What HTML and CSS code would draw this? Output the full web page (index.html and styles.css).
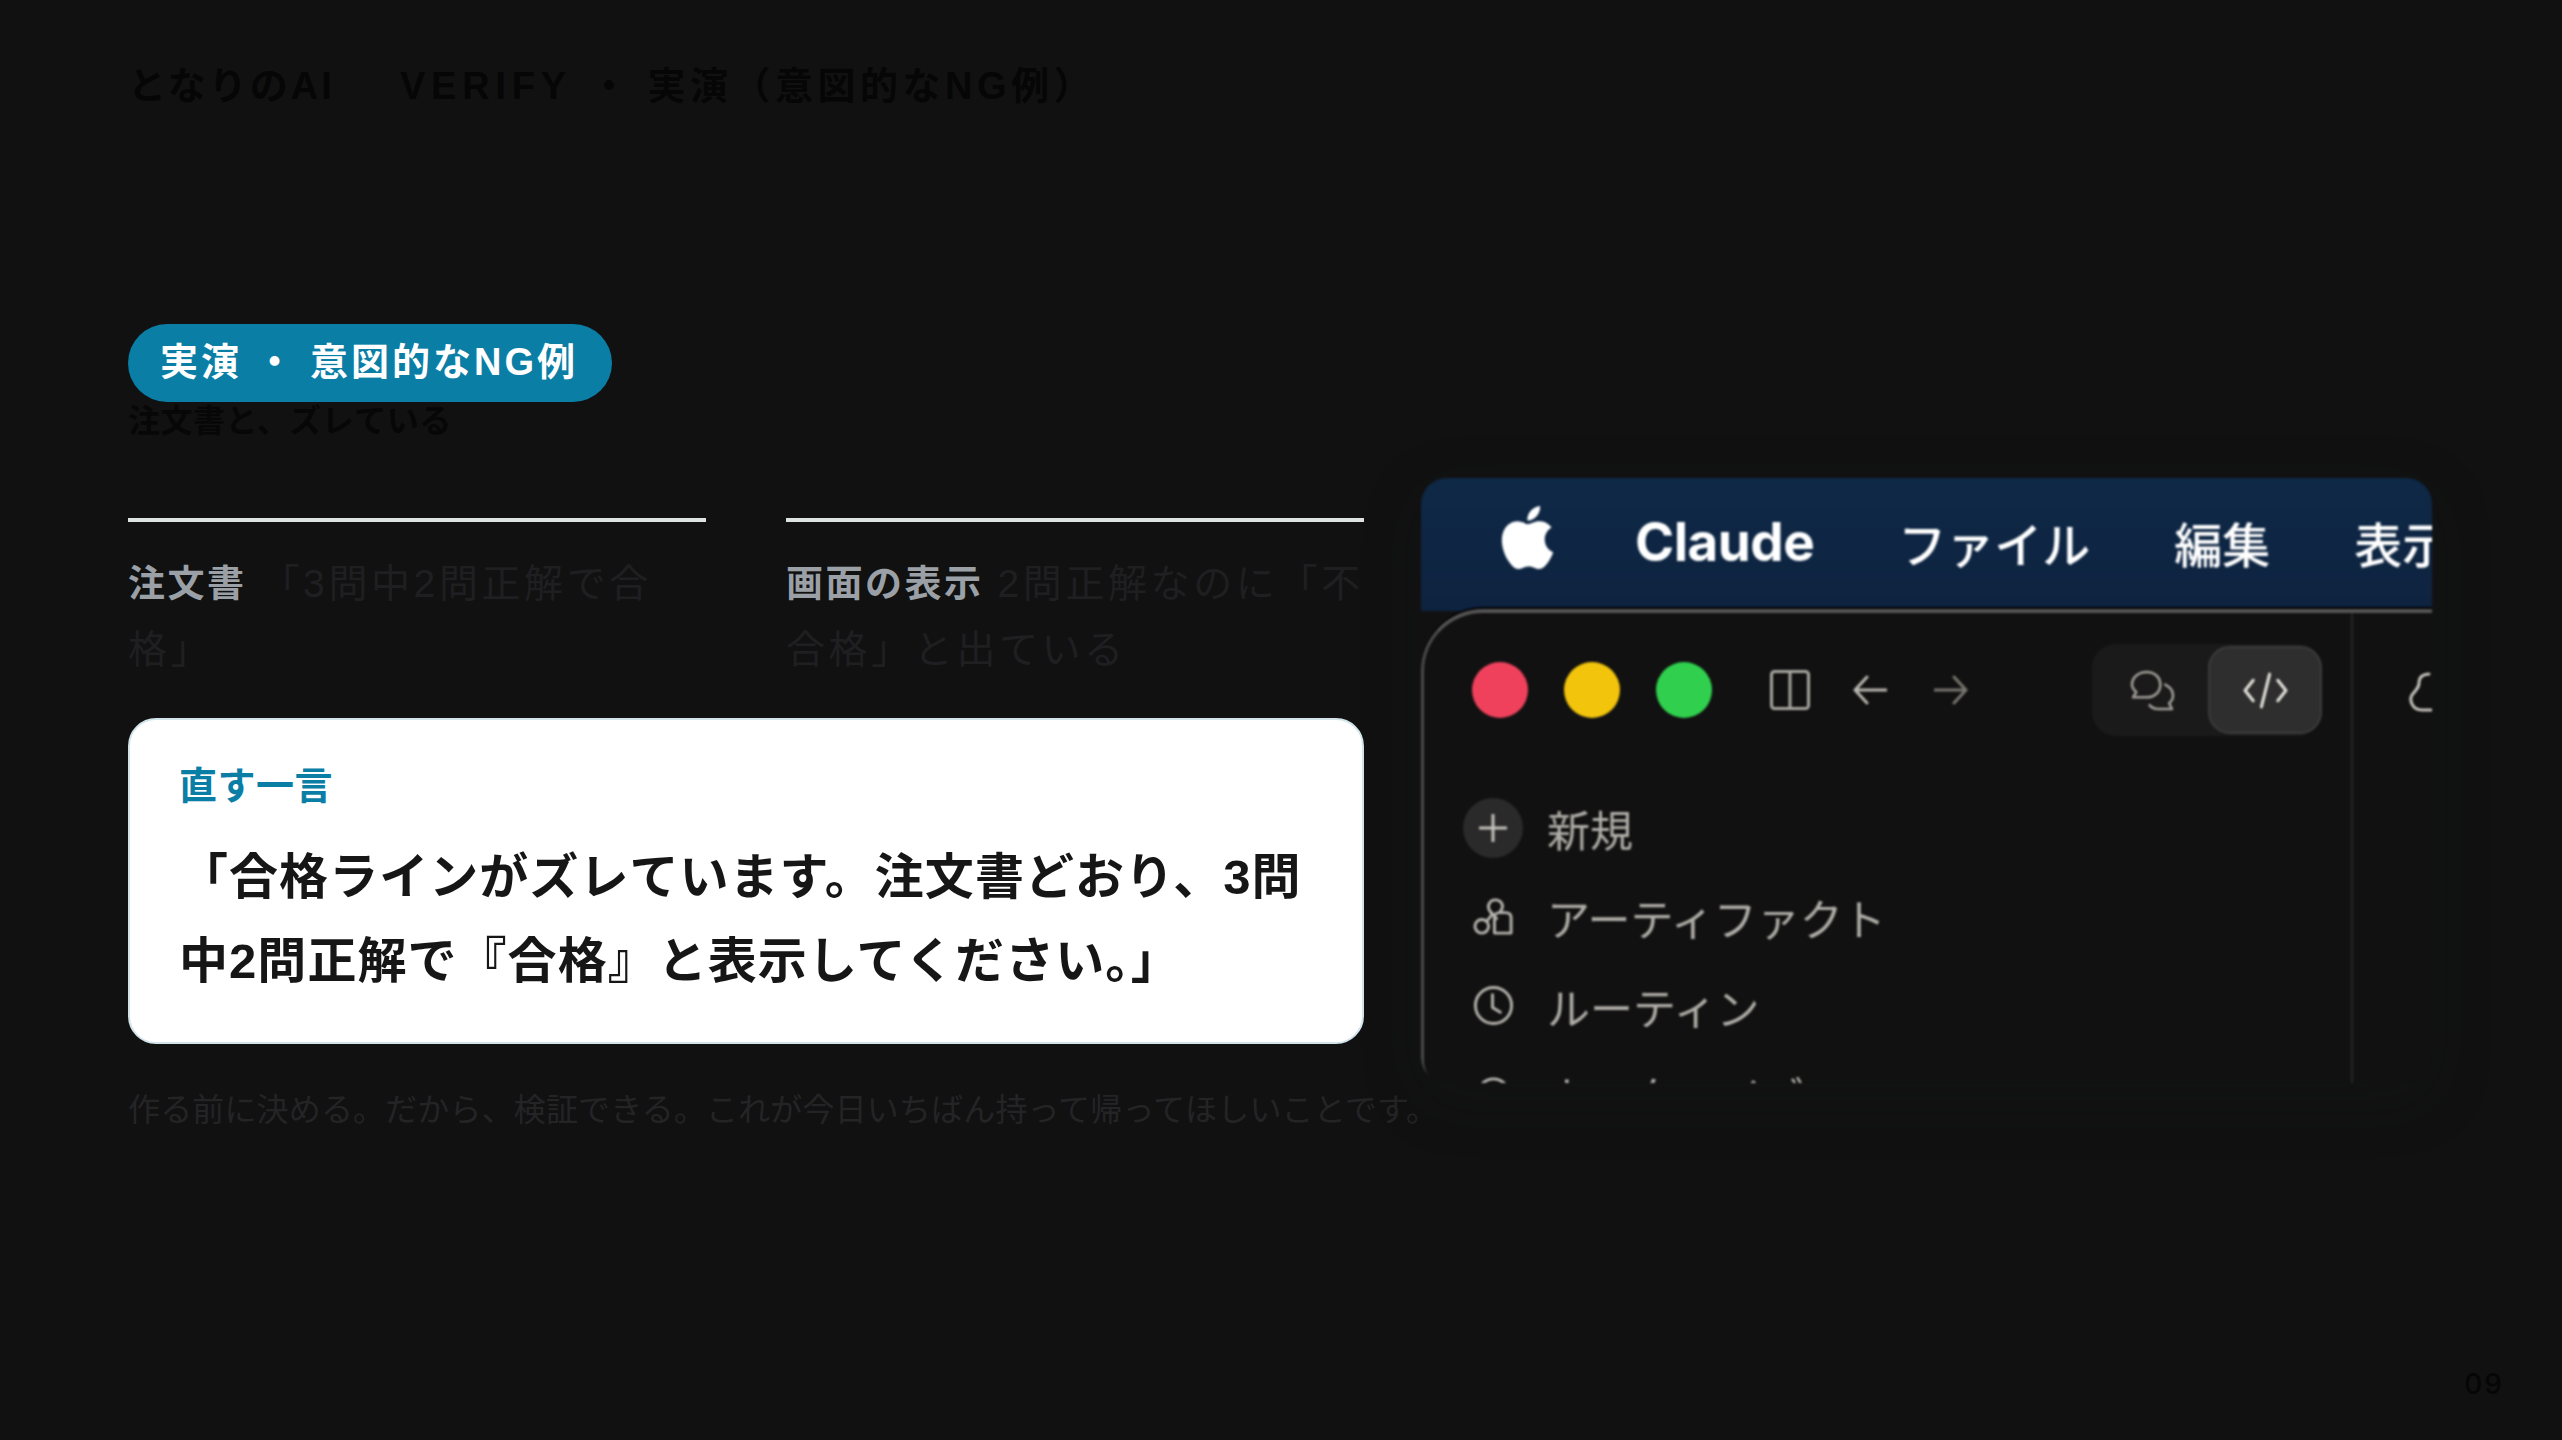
FILE: index.html
```html
<!DOCTYPE html>
<html lang="ja">
<head>
<meta charset="utf-8">
<title>実演 ・ 意図的なNG例</title>
<link rel="stylesheet" href="styles.css">
</head>
<body>
<div class="page">
  <header class="head"><span class="brand">となりのAI</span><span class="verify">VERIFY</span><span class="crumb"> ・ 実演（意図的なNG例）</span></header>
  <main class="main">
    <section class="left">
      <div class="pill">実演 ・ 意図的なNG例</div>
      <h2 class="sub">注文書と、ズレている</h2>
      <div class="cols">
        <div class="col"><p class="col-text"><b>注文書</b>「3問中2問正解で合格」</p></div>
        <div class="col"><p class="col-text"><b>画面の表示</b>2問正解なのに「不合格」と出ている</p></div>
      </div>
      <div class="card">
        <div class="card-label">直す一言</div>
        <p class="card-text">「合格ラインがズレています。注文書どおり、3問中2問正解で『合格』と表示してください。」</p>
      </div>
      <p class="note">作る前に決める。だから、検証できる。これが今日いちばん持って帰ってほしいことです。</p>
    </section>
    <figure class="shot">
      <div class="menubar">
        <svg class="apple" viewBox="0 0 24 24" fill="#fff"><path d="M12.152 6.896c-.948 0-2.415-1.078-3.96-1.04-2.04.027-3.91 1.183-4.961 3.014-2.117 3.675-.546 9.103 1.519 12.09 1.013 1.454 2.208 3.09 3.792 3.039 1.52-.065 2.09-.987 3.935-.987 1.831 0 2.35.987 3.96.948 1.637-.026 2.676-1.48 3.676-2.948 1.156-1.688 1.636-3.325 1.662-3.415-.039-.013-3.182-1.221-3.22-4.857-.026-3.04 2.48-4.494 2.597-4.559-1.429-2.09-3.623-2.324-4.39-2.376-2-.156-3.675 1.09-4.61 1.09zM15.53 3.83c.843-1.012 1.4-2.427 1.245-3.83-1.207.052-2.662.805-3.532 1.818-.78.896-1.454 2.338-1.273 3.714 1.338.104 2.715-.688 3.559-1.701"/></svg>
        <span class="app">Claude</span>
        <span>ファイル</span>
        <span>編集</span>
        <span>表示</span>
      </div>
      <div class="window">
        <div class="sidebar">
          <div class="toolbar">
            <div class="lights"><i class="light red"></i><i class="light yellow"></i><i class="light green"></i></div>
            <svg class="tb-icon panel" viewBox="0 0 40 40" fill="none" stroke="#a8a6a0" stroke-width="3"><rect x="1.5" y="1.5" width="37" height="37" rx="3"/><path d="M20 1.5v37"/></svg>
            <svg class="tb-icon arrow" viewBox="0 0 34 30" fill="none" stroke="#b8b6b0" stroke-width="3" stroke-linecap="round" stroke-linejoin="round"><path d="M33 15H2M14 2 2 15l12 13"/></svg>
            <svg class="tb-icon arrow fwd" viewBox="0 0 34 30" fill="none" stroke="#77756f" stroke-width="3" stroke-linecap="round" stroke-linejoin="round"><path d="M1 15h31M20 2l12 13-12 13"/></svg>
            <div class="segment">
              <div class="seg-item">
                <svg class="seg-icon chat" viewBox="0 0 46 42" fill="none" stroke="#a09e98" stroke-width="2.6" stroke-linejoin="round" stroke-linecap="round"><path d="M17 2c8 0 14 5.500 14 13 0 7.500-6 13-14 13H3l3.500-5.500C3.500 20 2 18 2 15 2 7.500 9 2 17 2z"/><path d="M36 15c5 2.500 8 6.500 8 11 0 3.500-1.500 6-4 8l3 6H29c-4 0-7-1.500-9-4"/></svg>
              </div>
              <div class="seg-item active">
                <svg class="seg-icon" viewBox="0 0 44 36" fill="none" stroke="#e4e2dc" stroke-width="3" stroke-linecap="round" stroke-linejoin="round"><path d="M10 8 2 18l8 10M34 8l8 10-8 10M26 2l-8 32"/></svg>
              </div>
            </div>
          </div>
          <ul class="nav">
            <li class="nav-item"><span class="nav-ico plus"><svg viewBox="0 0 28 28" fill="none" stroke="#c4c2bc" stroke-width="3" stroke-linecap="round"><path d="M14 1v26M1 14h26"/></svg></span><span>新規</span></li>
            <li class="nav-item"><span class="nav-ico"><svg viewBox="0 0 42 38" fill="none" stroke="#b4b2ac" stroke-width="3" stroke-linejoin="round"><path d="M25 22c-3-3-6-6-8-9-3-5 0-11 6-11 5 0 8 4 7 8-1 3-2 4-3 6"/><path d="M22 36V20c0-3 2-5 5-5h6c4 0 6 2 6 5v16z"/><circle cx="9" cy="29" r="7"/><path d="M14 24l7-9"/></svg></span><span>アーティファクト</span></li>
            <li class="nav-item"><span class="nav-ico"><svg viewBox="0 0 42 42" fill="none" stroke="#b4b2ac" stroke-width="3" stroke-linecap="round" stroke-linejoin="round"><circle cx="21" cy="21" r="18.500"/><path d="M20 10v13l8 5"/></svg></span><span>ルーティン</span></li>
            <li class="nav-item"><span class="nav-ico"><svg viewBox="0 0 42 42" fill="none" stroke="#b4b2ac" stroke-width="3"><circle cx="21" cy="21" r="16"/></svg></span><span>カスタマイズ</span></li>
          </ul>
        </div>
        <div class="pane">
          <svg class="pane-icon" viewBox="0 0 40 42" fill="none" stroke="#c4c2bc" stroke-width="3" stroke-linecap="round"><path d="M26 3c-6 0-10 3-10 9 0 4-2 6-7 12-3 5 0 15 10 15h12"/></svg>
        </div>
      </div>
    </figure>
  </main>
  <footer class="pageno">09</footer>
</div>
</body>
</html>
```
FILE: styles.css
```css
* { box-sizing: border-box; }
html, body { margin: 0; padding: 0; background: #111111; }
body { font-family: "Liberation Sans", "Noto Sans CJK JP", sans-serif; }
.page {
  width: 2562px;
  height: 1440px;
  padding: 59px 58px 39px 128px;
  display: flex;
  flex-direction: column;
  overflow: hidden;
  background: #111111;
}
.head {
  font-size: 38px;
  line-height: 54px;
  font-weight: 700;
  letter-spacing: 4.5px;
  color: #060606;
  white-space: nowrap;
}
.brand { margin-right: 65px; letter-spacing: 3px; }
.verify { letter-spacing: 5.8px; }
.crumb { margin-left: 3px; }
.main {
  display: flex;
  align-items: flex-start;
  gap: 57px;
  margin-top: 211px;
}
.left { width: 1236px; flex: none; }
.pill {
  display: inline-flex;
  align-items: center;
  height: 78px;
  width: 484px;
  padding: 0 32px 9px;
  border-radius: 39px;
  background: #0b7ea6;
  color: #fff;
  font-size: 38px;
  font-weight: 700;
  letter-spacing: 3px;
  white-space: nowrap;
  vertical-align: top;
}
.sub {
  margin: 3px 0 0;
  font-size: 32px;
  line-height: 32px;
  font-weight: 700;
  letter-spacing: 0.5px;
  color: #070707;
}
.cols {
  display: grid;
  grid-template-columns: 578px 578px;
  gap: 80px;
  margin-top: 81px;
}
.col { border-top: 4px solid #dde3e3; padding-top: 29px; }
.col-text {
  margin: 0;
  font-size: 39px;
  line-height: 65px;
  letter-spacing: 3.6px;
  color: #1f1f21;
}
.col-text b { color: #9aa0a6; font-weight: 700; font-size: 37px; letter-spacing: 2.5px; margin-right: 14px; }
.card {
  margin-top: 36px;
  height: 326px;
  padding: 42px 49px;
  background: #fff;
  border: 2px solid #d2e4ea;
  border-radius: 28px;
}
.card-label {
  font-size: 38px;
  line-height: 48px;
  font-weight: 700;
  letter-spacing: 0.5px;
  color: #0b7ea6;
}
.card-text {
  margin: 25px 0 0;
  font-size: 49px;
  line-height: 84px;
  font-weight: 700;
  letter-spacing: 1.05px;
  color: #161616;
}
.note {
  margin: 42px 0 0;
  font-size: 32px;
  line-height: 48px;
  letter-spacing: 0.15px;
  color: #242426;
  white-space: nowrap;
}
.shot {
  flex: none;
  margin: 154px 0 0;
  width: 1011px;
  height: 605px;
  border-radius: 26px;
  overflow: hidden;
  background: linear-gradient(180deg, #0e2947 0%, #0e2340 22%, #111 22%);
  filter: blur(0.9px);
  box-shadow: 0 16px 60px rgba(24, 28, 32, 0.22);
  position: relative;
}
.menubar {
  height: 131px;
  display: flex;
  align-items: center;
  padding: 0 0 3px 75px;
  gap: 84px;
  color: #fff;
  font-size: 48px;
  font-weight: 500;
  white-space: nowrap;
  font-family: "Noto Sans CJK JP", sans-serif;
}
.apple { width: 63px; height: 63px; flex: none; margin: -10px -8px 0 0; }
.app { font-family: Inter, "Liberation Sans", sans-serif; font-weight: 700; font-size: 53px; letter-spacing: -0.5px; }
.window {
  height: 474px;
  display: flex;
  background: #111;
  border-top: 4px solid #555;
  border-left: 3px solid #4a4a4a;
  border-top-left-radius: 62px;
  border-bottom-left-radius: 22px;
  box-shadow: 0 -2px 0 #000;
}
.sidebar { width: 929px; flex: none; border-right: 2px solid #262626; }
.toolbar {
  display: flex;
  align-items: center;
  height: 120px;
  margin-top: 17px;
  padding-left: 48px;
}
.lights { display: flex; gap: 36px; }
.light { display: block; width: 56px; height: 56px; border-radius: 50%; }
.red { background: #f0415c; }
.yellow { background: #f2c40c; }
.green { background: #30d04e; }
.tb-icon { display: block; flex: none; }
.panel { width: 40px; height: 40px; margin-left: 58px; }
.arrow { width: 34px; height: 30px; margin-left: 43px; }
.arrow.fwd { margin-left: 47px; }
.segment {
  display: flex;
  align-items: center;
  width: 230px;
  height: 92px;
  margin-left: 124px;
  background: #1a1a1a;
  border-radius: 24px;
}
.seg-item { flex: 1; height: 88px; display: flex; align-items: center; justify-content: center; border-radius: 22px; }
.seg-item.active { flex: none; width: 114px; background: #2e2e2e; border: 2px solid #3c3c3c; }
.seg-icon { width: 45px; height: 41px; display: block; }
.seg-icon.chat { margin-left: 4px; }
.nav {
  list-style: none;
  margin: 33px 0 0;
  padding: 0 0 0 39px;
  font-size: 43px;
  color: #b0aea8;
  font-family: "Noto Sans CJK JP", sans-serif;
}
.nav-item { display: flex; align-items: center; height: 89px; gap: 24px; white-space: nowrap; }
.nav-ico { width: 60px; height: 60px; flex: none; display: flex; align-items: center; justify-content: center; }
.nav-ico svg { width: 41px; height: 41px; display: block; }
.nav-ico.plus { background: #2a2a2a; border-radius: 50%; }
.nav-ico.plus svg { width: 28px; height: 28px; }
.pane { flex: 1; display: flex; align-items: flex-start; padding: 58px 0 0 50px; overflow: hidden; }
.pane-icon { width: 40px; height: 42px; flex: none; }
.pageno {
  margin-top: auto;
  align-self: flex-end;
  font-family: Inter, "Noto Sans", sans-serif;
  font-size: 28px;
  line-height: 34px;
  font-weight: 500;
  letter-spacing: 2px;
  color: #060606;
}
```
